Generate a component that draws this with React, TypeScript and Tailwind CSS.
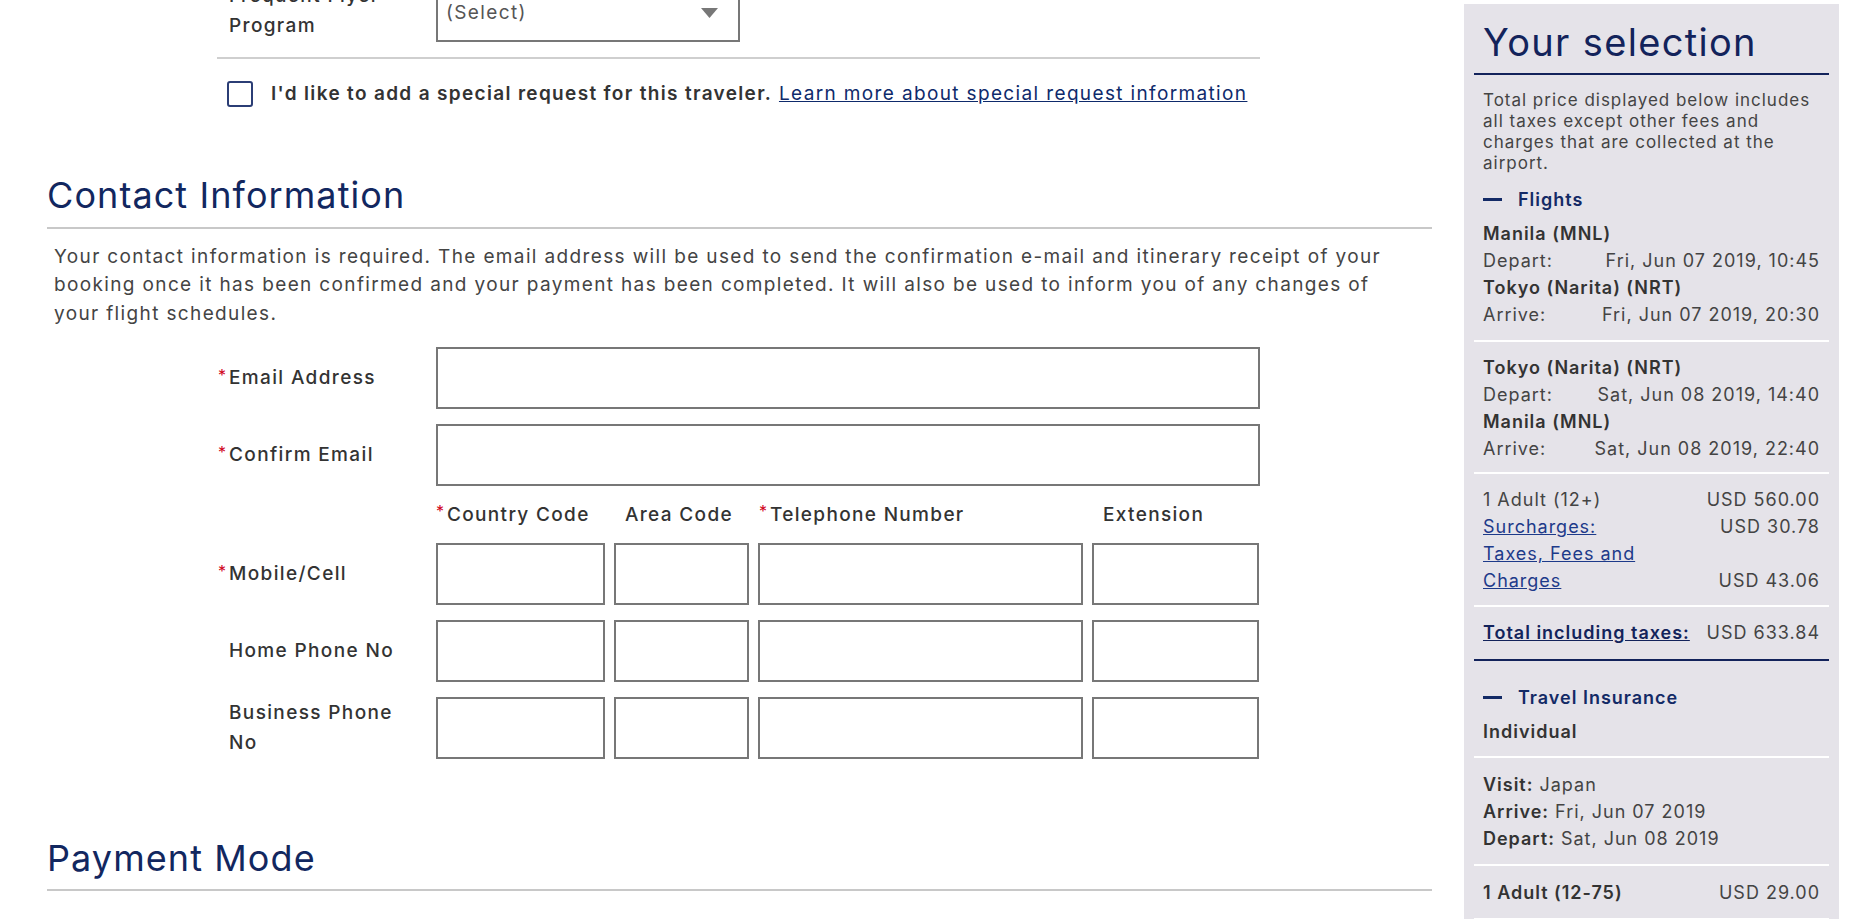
import React from 'react';

const Req = () => (
  <span className="absolute -left-[11px] -top-[6px] text-[16px] font-normal tracking-normal text-[#d0021b]">*</span>
);

const Label: React.FC<{ text: React.ReactNode; req?: boolean }> = ({ text, req }) => (
  <div className="w-[219px] shrink-0 pl-[12px] text-[19px] leading-[30px] font-medium text-[#333]">
    <span className="relative">
      {req && <Req />}
      {text}
    </span>
  </div>
);

const Box: React.FC<{ w: string }> = ({ w }) => (
  <div className={`${w} h-[62px] border-2 border-[#777] bg-white`} />
);

const PhoneRow: React.FC<{ label: React.ReactNode; req?: boolean }> = ({ label, req }) => (
  <div className="flex items-center">
    <Label text={label} req={req} />
    <div className="flex gap-[9px]">
      <div className="w-[169px] h-[62px] border-2 border-[#777]" />
      <div className="w-[135px] h-[62px] border-2 border-[#777]" />
      <div className="w-[325px] h-[62px] border-2 border-[#777]" />
      <div className="w-[167px] h-[62px] border-2 border-[#777]" />
    </div>
  </div>
);

const Row: React.FC<{ left: React.ReactNode; right: React.ReactNode }> = ({ left, right }) => (
  <div className="flex justify-between">
    <span>{left}</span>
    <span className="text-right">{right}</span>
  </div>
);

const Dash = () => <span className="inline-block w-[19px] h-[3px] bg-[#132a66] mr-[16px]" />;

export default function App() {
  return (
    <div className="flex w-[1873px] h-[919px] overflow-hidden bg-white font-['Inter',sans-serif]">
      <main className="w-[1432px] shrink-0 pl-[47px] tracking-[0.085em]">
        <div className="ml-[170px] w-[1043px] -mt-[20px]">
          <div className="flex items-center border-b-2 border-[#cfcfcf] pb-[15px]">
            <Label text={<>Frequent Flyer<br />Program</>} />
            <div className="w-[304px] h-[62px] border-2 border-[#777] flex items-center justify-between pl-[8px] pr-[20px] pt-[4px]">
              <span className="text-[19px] text-[#555]">(Select)</span>
              <svg width="17" height="10" viewBox="0 0 17 10">
                <path d="M0 0 L17 0 L8.5 10 Z" fill="#777" />
              </svg>
            </div>
          </div>
          <div className="flex items-center mt-[21px] pl-[10px] gap-[18px]">
            <div className="w-[26px] h-[26px] border-[2.5px] border-[#2b3d75] rounded-[3px] bg-white shrink-0" />
            <p className="text-[19px] text-[#333] whitespace-nowrap">
              <span className="font-semibold tracking-[0.07em]">I'd like to add a special request for this traveler.</span>{' '}
              <a className="underline text-[#0e2a6b]">Learn more about special request information</a>
            </p>
          </div>
        </div>

        <h2 className="mt-[66px] text-[36px] leading-[40px] tracking-[0.03em] text-[#12275f] pb-[12px] border-b-2 border-[#c8c8c8]">
          Contact Information
        </h2>
        <p className="mt-[14px] pl-[7px] pr-[30px] text-[19px] leading-[28.5px] text-[#444]">
          Your contact information is required. The email address will be used to send the confirmation e-mail and itinerary receipt of your booking once it has been confirmed and your payment has been completed. It will also be used to inform you of any changes of your flight schedules.
        </p>

        <div className="ml-[170px] mt-[19px] flex flex-col gap-[15px]">
          <div className="flex items-center">
            <Label text="Email Address" req />
            <Box w="w-[824px]" />
          </div>
          <div className="flex items-center">
            <Label text="Confirm Email" req />
            <Box w="w-[824px]" />
          </div>
          <div className="flex text-[19px] leading-[28px] font-medium tracking-[0.07em] text-[#333] -mb-[1px]">
            <div className="w-[219px]" />
            <div className="w-[178px] pl-[11px]"><span className="relative"><Req />Country Code</span></div>
            <div className="w-[144px] pl-[11px]">Area Code</div>
            <div className="w-[334px] pl-[12px]"><span className="relative"><Req />Telephone Number</span></div>
            <div className="w-[167px] pl-[11px]">Extension</div>
          </div>
          <PhoneRow label="Mobile/Cell" req />
          <PhoneRow label="Home Phone No" />
          <PhoneRow label={<>Business Phone<br />No</>} />
        </div>

        <h2 className="mt-[79px] text-[36px] leading-[40px] tracking-[0.03em] text-[#12275f] pb-[11px] border-b-2 border-[#c8c8c8]">
          Payment Mode
        </h2>
      </main>

      <aside className="ml-[32px] mt-[4px] w-[375px] shrink-0 bg-[#e5e3e9] px-[10px] text-[18px] leading-[27px] tracking-[0.055em] text-[#444]">
        <h2 className="pl-[9px] pt-[16px] pb-[9px] text-[38px] leading-[44px] tracking-[0.035em] text-[#13235b] border-b-2 border-[#13235b]">
          Your selection
        </h2>
        <p className="px-[9px] mt-[15px] text-[17px] leading-[21px] text-[#444]">
          Total price displayed below includes all taxes except other fees and charges that are collected at the airport.
        </p>
        <div className="px-[9px] mt-[12px] font-semibold text-[#132a66] flex items-center">
          <Dash />Flights
        </div>
        <div className="px-[9px] mt-[7px] pb-[12px] border-b-2 border-white">
          <div className="font-semibold text-[#333]">Manila (MNL)</div>
          <Row left="Depart:" right="Fri, Jun 07 2019, 10:45" />
          <div className="font-semibold text-[#333]">Tokyo (Narita) (NRT)</div>
          <Row left="Arrive:" right="Fri, Jun 07 2019, 20:30" />
        </div>
        <div className="px-[9px] pt-[12px] pb-[10px] border-b-2 border-white">
          <div className="font-semibold text-[#333]">Tokyo (Narita) (NRT)</div>
          <Row left="Depart:" right="Sat, Jun 08 2019, 14:40" />
          <div className="font-semibold text-[#333]">Manila (MNL)</div>
          <Row left="Arrive:" right="Sat, Jun 08 2019, 22:40" />
        </div>
        <div className="px-[9px] pt-[12px] pb-[11px] border-b-2 border-white">
          <Row left="1 Adult (12+)" right="USD 560.00" />
          <Row left={<a className="underline text-[#1d3a8a]">Surcharges: </a>} right="USD 30.78" />
          <div className="flex justify-between items-end">
            <a className="w-1/2 underline text-[#1d3a8a]">Taxes, Fees and Charges</a>
            <span>USD 43.06</span>
          </div>
        </div>
        <div className="px-[9px] pt-[12px] pb-[13px] border-b-2 border-[#13235b]">
          <Row left={<a className="underline font-semibold text-[#13235b]">Total including taxes:</a>} right="USD 633.84" />
        </div>
        <div className="px-[9px] mt-[23px] font-semibold text-[#132a66] flex items-center">
          <Dash />Travel Insurance
        </div>
        <div className="px-[9px] mt-[7px] pb-[11px] border-b-2 border-white font-semibold text-[#333]">Individual</div>
        <div className="px-[9px] pt-[13px] pb-[12px] border-b-2 border-white">
          <div><span className="font-semibold text-[#333]">Visit:</span> Japan</div>
          <div><span className="font-semibold text-[#333]">Arrive:</span> Fri, Jun 07 2019</div>
          <div><span className="font-semibold text-[#333]">Depart:</span> Sat, Jun 08 2019</div>
        </div>
        <div className="px-[9px] pt-[13px] pb-[12px] border-b-2 border-white">
          <Row left={<span className="font-semibold text-[#333]">1 Adult (12-75)</span>} right="USD 29.00" />
        </div>
      </aside>
    </div>
  );
}
